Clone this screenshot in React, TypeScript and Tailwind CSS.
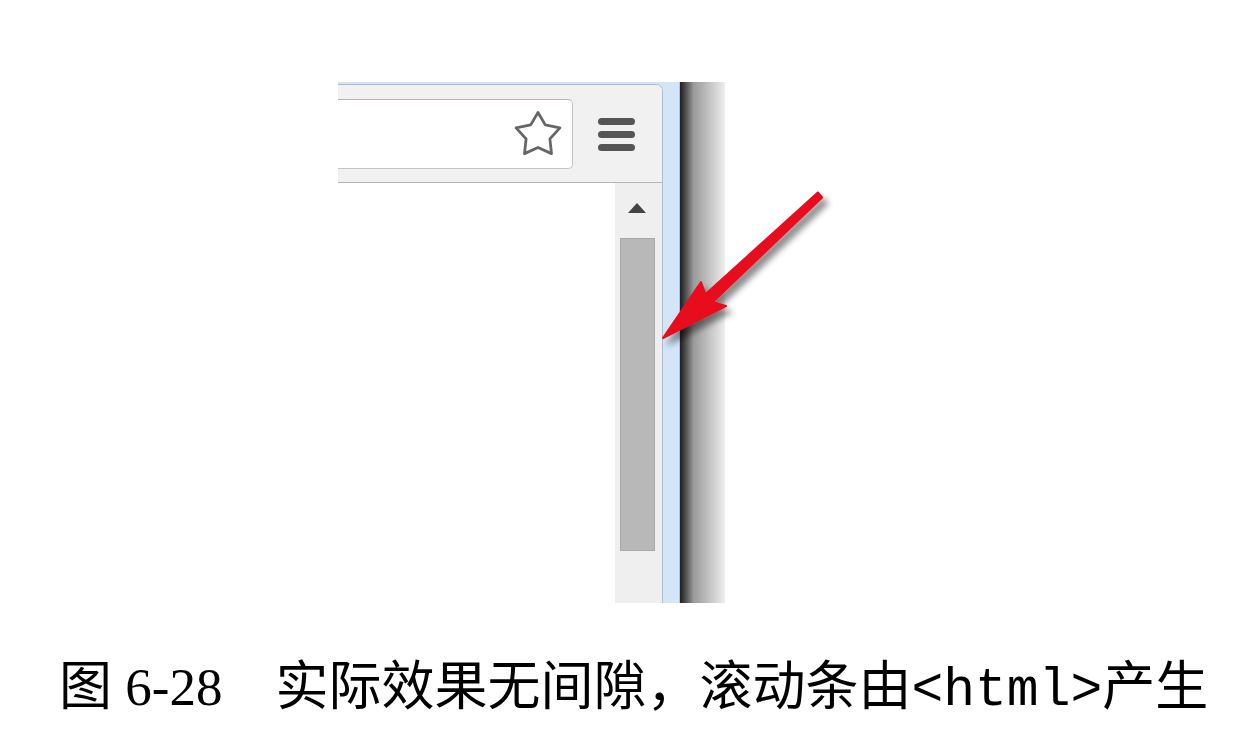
export default function App() {
  return (
    <div className="w-[1242px] h-[730px] bg-white flex flex-col overflow-hidden">
      <Figure />
      <p className="mt-[58px] pl-[59px] text-[53px] leading-none text-black whitespace-pre font-['Liberation_Serif','Noto_Sans_CJK_SC',serif]">
        图 6-28{"\u3000"}实际效果无间隙，滚动条由
        <span className="font-['Liberation_Mono',monospace]">&lt;html&gt;</span>
        产生
      </p>
    </div>
  );
}

function Figure() {
  return (
    <div className="relative ml-[338px] mt-[82px] w-[388px] h-[521px] flex">
      {/* browser window edge, light blue frame */}
      <div className="w-[342px] flex flex-col bg-[#d4e5f8] pt-[2px] pr-[16px] border-r border-[#a9c6e8]">
        <div className="flex-1 flex flex-col bg-white rounded-tr-[7px] overflow-hidden border-t border-r border-[#a7bfdc]">
          {/* toolbar */}
          <div className="h-[98px] flex items-start bg-[#f1f1f1] border-b border-[#b4b4b4]">
            <div className="mt-[14px] w-[235px] h-[70px] flex items-center justify-end pr-[9px] bg-white border border-l-0 border-[#c4c4c4] border-t-[#bfb3ab] rounded-r-[5px]">
              <svg width="50" height="48" viewBox="0 0 50 48">
                <polygon
                  points="25,2.5 32.3,14.9 46.9,17.9 36.9,28.9 38.5,43.6 25,37.5 11.5,43.6 13.1,28.9 3.1,17.9 17.7,14.9"
                  fill="white"
                  stroke="#666"
                  strokeWidth="2.8"
                  strokeLinejoin="round"
                />
              </svg>
            </div>
            <div className="ml-[25px] mt-[33px] flex flex-col gap-[6px]">
              <div className="w-[37px] h-[7px] rounded-full bg-[#555]" />
              <div className="w-[37px] h-[7px] rounded-full bg-[#555]" />
              <div className="w-[37px] h-[7px] rounded-full bg-[#555]" />
            </div>
          </div>
          {/* page + scrollbar */}
          <div className="flex-1 flex">
            <div className="flex-1 bg-white" />
            <div className="w-[47px] flex flex-col items-start bg-[#efefef] pl-[5px]">
              <div className="mt-[20px] ml-[8px] w-0 h-0 border-l-[9px] border-r-[9px] border-b-[10px] border-l-transparent border-r-transparent border-b-[#444]" />
              <div className="mt-[25px] w-[35px] h-[313px] bg-[#b8b8b8] border border-[#a9a9a9]" />
            </div>
          </div>
        </div>
      </div>
      {/* dark window shadow */}
      <div className="w-[45px] bg-linear-to-r from-[#1f1f1f] via-[#9a9a9a] via-30% to-[#eeeeee]" />

      {/* red arrow annotation */}
      <svg
        className="absolute left-0 top-0 overflow-visible pointer-events-none"
        width="520"
        height="300"
        viewBox="0 0 520 300"
      >
        <defs>
          <filter id="arrowShadow" x="-20%" y="-20%" width="140%" height="140%">
            <feDropShadow dx="5" dy="6" stdDeviation="3" floodColor="#000" floodOpacity="0.45" />
          </filter>
        </defs>
        <polygon
          points="479.8,110.5 367.4,212.2 363,200 325,256 388,224 374.8,220 484.2,115.5"
          fill="#e8111b"
          stroke="#e8111b"
          strokeWidth="2"
          strokeLinejoin="round"
          filter="url(#arrowShadow)"
        />
      </svg>
    </div>
  );
}
